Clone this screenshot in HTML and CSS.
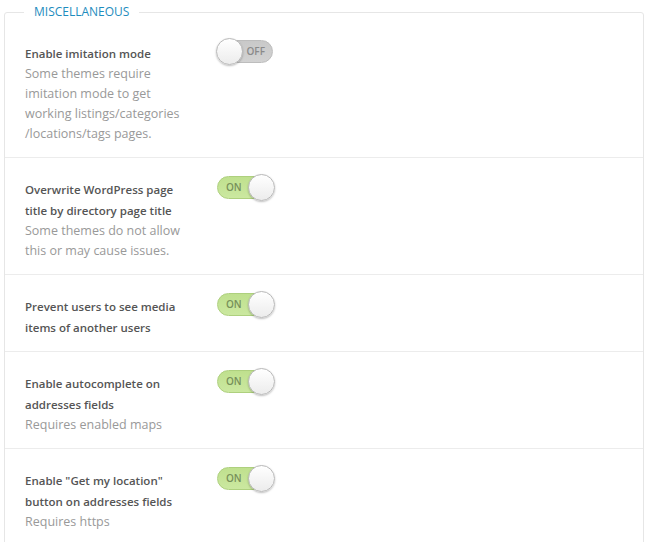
FILE: index.html
```html
<!DOCTYPE html>
<html>
<head>
<meta charset="utf-8">
<link rel="stylesheet" href="styles.css">
</head>
<body>
<fieldset class="box">
  <legend class="box-title">MISCELLANEOUS</legend>
  <div class="row">
    <div class="label">
      <div class="name">Enable imitation mode</div>
      <div class="desc">Some themes require imitation mode to get working listings/categories /locations/tags pages.</div>
    </div>
    <div class="toggle off"><span class="txt">OFF</span><span class="knob"></span></div>
  </div>
  <div class="row">
    <div class="label">
      <div class="name">Overwrite WordPress page title by directory page title</div>
      <div class="desc">Some themes do not allow this or may cause issues.</div>
    </div>
    <div class="toggle on"><span class="txt">ON</span><span class="knob"></span></div>
  </div>
  <div class="row">
    <div class="label">
      <div class="name">Prevent users to see media items of another users</div>
    </div>
    <div class="toggle on"><span class="txt">ON</span><span class="knob"></span></div>
  </div>
  <div class="row">
    <div class="label">
      <div class="name">Enable autocomplete on addresses fields</div>
      <div class="desc">Requires enabled maps</div>
    </div>
    <div class="toggle on"><span class="txt">ON</span><span class="knob"></span></div>
  </div>
  <div class="row">
    <div class="label">
      <div class="name">Enable "Get my location" button on addresses fields</div>
      <div class="desc">Requires https</div>
    </div>
    <div class="toggle on"><span class="txt">ON</span><span class="knob"></span></div>
  </div>
</fieldset>
</body>
</html>
```
FILE: styles.css
```css
html, body {
  margin: 0;
  padding: 0;
  background: #fff;
}
body {
  font-family: "Open Sans", "Noto Sans", sans-serif;
  padding: 0 4px;
}
.box {
  margin: 0;
  padding: 0;
  width: 638px;
  border: 1px solid #e6e6e6;
  border-radius: 3px;
  min-width: 0;
}
.box-title {
  margin-left: 19px;
  padding: 0 10px;
  color: #1e8cbe;
  font-size: 12px;
  line-height: 24px;
}
.row {
  display: flex;
  padding: 16px 0 13px 20px;
  border-top: 1px solid #ececec;
}
.row:first-of-type {
  border-top: 0;
  padding-top: 14px;
}
.label {
  width: 160px;
  margin-right: 32px;
  padding-top: 5px;
}
.name {
  font-size: 11.5px;
  font-weight: 600;
  color: #555;
  line-height: 21px;
}
.desc {
  font-size: 12.5px;
  color: #999;
  line-height: 20px;
}
.toggle {
  position: relative;
  width: 56px;
  height: 23px;
  border-radius: 12px;
  box-sizing: border-box;
  flex: none;
  margin-top: 2px;
}
.toggle.off {
  background: linear-gradient(#c9c9c9, #d2d2d2);
  border: 1px solid #bdbdbd;
}
.toggle.on {
  background: linear-gradient(#bfe08e, #cbe8a0);
  border: 1px solid #aed07e;
}
.txt {
  position: absolute;
  top: 0;
  font-size: 10px;
  line-height: 21px;
  font-weight: 600;
}
.off .txt {
  right: 7px;
  color: #8a8a8a;
}
.on .txt {
  left: 8px;
  color: #77905a;
}
.knob {
  position: absolute;
  top: -3px;
  width: 27px;
  height: 27px;
  border-radius: 50%;
  background: linear-gradient(#ffffff, #ececec);
  border: 1px solid #b8b8b8;
  box-shadow: 0 1px 2px rgba(0,0,0,0.25);
  box-sizing: border-box;
}
.off .knob { left: -2px; }
.on .knob { right: -3px; }
```
